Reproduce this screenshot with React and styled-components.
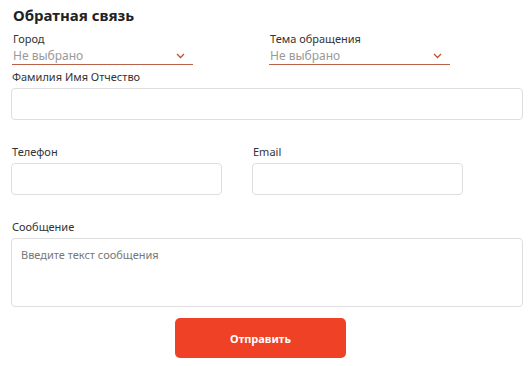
import React from 'react'
import styled, { createGlobalStyle } from 'styled-components'

const Global = createGlobalStyle`
  body {
    margin: 0;
    background: #fff;
    font-family: "Noto Sans", "Open Sans", sans-serif;
    color: #333;
  }
  * { box-sizing: border-box; }
`

const Form = styled.form`
  width: 531px;
  padding: 5px 8px 0 11px;
  display: flex;
  flex-direction: column;
`

const Title = styled.h2`
  margin: 0 0 0 2px;
  font-size: 15px;
  line-height: 20px;
  font-weight: 700;
  color: #222;
`

const SelectRow = styled.div`
  display: flex;
  gap: 76px;
  margin-top: 7px;
  padding-left: 1px;
`

const Select = styled.div`
  width: 181px;
  display: flex;
  flex-direction: column;
`

const SmallLabel = styled.span`
  font-size: 11px;
  line-height: 13px;
  color: #333;
  padding-left: 1px;
`

const SelectValue = styled.div`
  display: flex;
  align-items: center;
  justify-content: space-between;
  height: 20px;
  padding: 2px 8px 0 1px;
  border-bottom: 1px solid #b8604a;
  font-size: 12px;
  color: #999;
`

const Label = styled.label`
  display: block;
  font-size: 11px;
  line-height: 13px;
  color: #333;
  padding-left: 1px;
  margin-bottom: 5px;
`

const Field = styled.div`
  display: flex;
  flex-direction: column;
  width: ${p => p.$w || '512px'};
  margin-top: ${p => p.$mt || '0'};
`

const Input = styled.input`
  height: 32px;
  width: 100%;
  border: 1px solid #dedede;
  border-radius: 4px;
  font-family: inherit;
  font-size: 12px;
  outline: none;
`

const Row = styled.div`
  display: flex;
  gap: 30px;
  margin-top: 25px;
`

const TextArea = styled.textarea`
  height: 69px;
  width: 100%;
  border: 1px solid #dedede;
  border-radius: 4px;
  padding: 8px 9px;
  font-family: inherit;
  font-size: 11px;
  resize: none;
  outline: none;
  &::placeholder { color: #777; }
`

const Submit = styled.button`
  align-self: center;
  margin: 11px 0 0 -13px;
  width: 171px;
  height: 40px;
  border: none;
  border-radius: 5px;
  background: #ee4125;
  color: #fff;
  font-family: inherit;
  font-weight: 700;
  font-size: 11px;
  cursor: pointer;
`

const Chevron = () => (
  <svg width="9" height="6" viewBox="0 0 9 6">
    <path d="M1 1l3.5 3.5L8 1" fill="none" stroke="#c2502f" strokeWidth="1.3" />
  </svg>
)

export default function App() {
  return (
    <>
      <Global />
      <Form onSubmit={e => e.preventDefault()}>
        <Title>Обратная связь</Title>
        <SelectRow>
          <Select>
            <SmallLabel>Город</SmallLabel>
            <SelectValue>Не выбрано <Chevron /></SelectValue>
          </Select>
          <Select>
            <SmallLabel>Тема обращения</SmallLabel>
            <SelectValue>Не выбрано <Chevron /></SelectValue>
          </Select>
        </SelectRow>
        <Field $mt="5px">
          <Label>Фамилия Имя Отчество</Label>
          <Input />
        </Field>
        <Row>
          <Field $w="211px">
            <Label>Телефон</Label>
            <Input />
          </Field>
          <Field $w="211px">
            <Label>Email</Label>
            <Input />
          </Field>
        </Row>
        <Field $mt="25px">
          <Label>Сообщение</Label>
          <TextArea placeholder="Введите текст сообщения" />
        </Field>
        <Submit>Отправить</Submit>
      </Form>
    </>
  )
}
